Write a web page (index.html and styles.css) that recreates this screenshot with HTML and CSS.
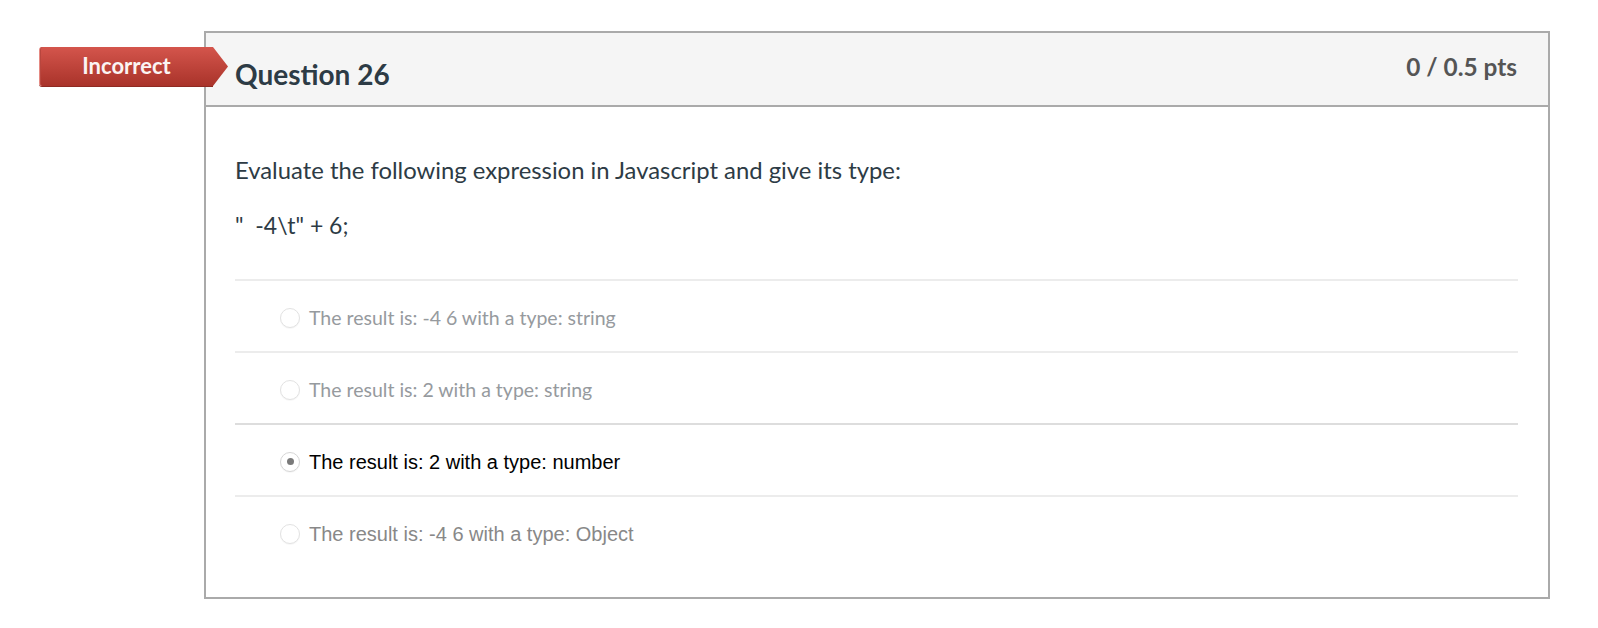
FILE: index.html
```html
<!DOCTYPE html>
<html>
<head>
<meta charset="utf-8">
<link rel="stylesheet" href="styles.css">
</head>
<body>
<div class="page">
  <div class="question">
    <div class="badge">Incorrect</div>
    <div class="header">
      <h2 class="title">Question 26</h2>
      <span class="pts">0 / 0.5 pts</span>
    </div>
    <div class="body">
      <p class="prompt">Evaluate the following expression in Javascript and give its type:</p>
      <p class="code">"&nbsp; -4\t" + 6;</p>
      <ul class="answers">
        <li class="answer lato"><span class="radio"></span><span class="label">The result is: -4 6 with a type: string</span></li>
        <li class="answer lato"><span class="radio"></span><span class="label">The result is: 2 with a type: string</span></li>
        <li class="answer arial selected"><span class="radio checked"></span><span class="label">The result is: 2 with a type: number</span></li>
        <li class="answer arial"><span class="radio"></span><span class="label">The result is: -4 6 with a type: Object</span></li>
      </ul>
    </div>
  </div>
</div>
</body>
</html>
```
FILE: styles.css
```css
html, body {
  margin: 0;
  padding: 0;
  background: #ffffff;
}
body {
  font-family: "Lato", "Liberation Sans", sans-serif;
}
.page {
  padding: 31px 0 0 204px;
}
.question {
  position: relative;
  width: 1346px;
  box-sizing: border-box;
  border: 2px solid #aaaaaa;
}
.badge {
  position: absolute;
  left: -167px;
  top: 14px;
  width: 174px;
  height: 39px;
  box-sizing: border-box;
  background: linear-gradient(#d4554c, #a9332a);
  border-left: 1px solid #e58a83;
  border-radius: 3px 0 0 3px;
  box-shadow: inset 1px 0 0 #b8463e, 0 1px 0 #8f2a22;
  color: #fbf4f3;
  font-weight: 700;
  font-size: 22px;
  line-height: 38px;
  text-align: center;
  z-index: 2;
}
.badge::after {
  content: "";
  position: absolute;
  right: -15px;
  top: 0;
  width: 15px;
  height: 39px;
  background: linear-gradient(#d4554c, #a9332a);
  clip-path: polygon(0 0, 100% 50%, 0 100%);
}
.header {
  height: 72px;
  background: #f5f5f5;
  border-bottom: 2px solid #aaaaaa;
  display: flex;
  justify-content: space-between;
  align-items: flex-start;
  padding: 0 31px 0 29px;
}
.title {
  margin: 24px 0 0 0;
  font-size: 28px;
  line-height: 34px;
  font-weight: 700;
  color: #2d3b45;
}
.pts {
  margin-top: 19px;
  font-size: 24.4px;
  line-height: 30px;
  font-weight: 700;
  color: #555555;
}
.body {
  padding: 47px 30px 30px 29px;
}
.prompt {
  margin: 0;
  font-size: 23.85px;
  line-height: 32px;
  color: #2d3b45;
}
.code {
  margin: 24px 0 0 0;
  font-size: 23px;
  line-height: 30px;
  color: #2d3b45;
  white-space: pre;
}
.answers {
  list-style: none;
  margin: 39px 0 0 0;
  padding: 0;
}
.answer {
  height: 72px;
  box-sizing: border-box;
  border-top: 2px solid #ececec;
  display: flex;
  align-items: center;
  padding: 3px 0 0 45px;
}
.answer.selected {
  border-top-color: #dddddd;
}
.radio {
  width: 20px;
  height: 20px;
  box-sizing: border-box;
  border-radius: 50%;
  border: 1px solid #e2e2e2;
  background: #ffffff;
  box-shadow: 0 1px 1px rgba(0,0,0,0.04);
  margin-right: 9px;
  display: flex;
  align-items: center;
  justify-content: center;
  flex: none;
}
.radio.checked {
  border-color: #d6d6d6;
}
.radio.checked::after {
  content: "";
  width: 7px;
  height: 7px;
  border-radius: 50%;
  background: #7a7a7a;
}
.label {
  font-size: 19.5px;
  line-height: 28px;
}
.lato .label {
  font-family: "Lato", sans-serif;
  color: #969a9e;
}
.arial .label {
  font-family: "Liberation Sans", Arial, sans-serif;
  font-size: 20px;
  color: #888888;
}
.arial.selected .label {
  color: #000000;
}
```
